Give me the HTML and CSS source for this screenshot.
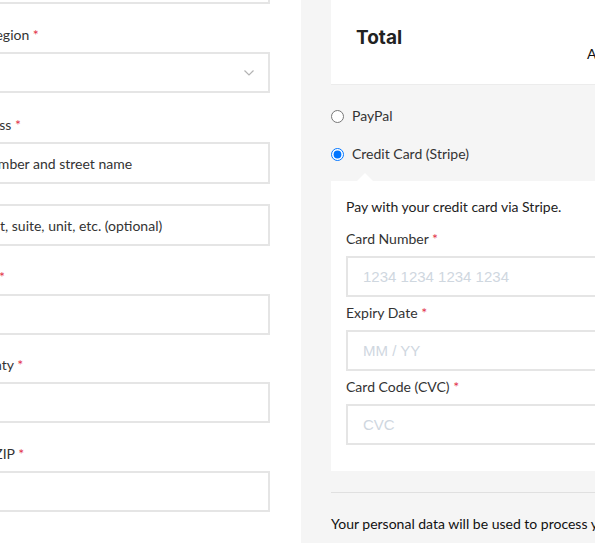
FILE: index.html
```html
<!DOCTYPE html>
<html lang="en">
<head>
<meta charset="utf-8">
<title>Checkout</title>
<link rel="stylesheet" href="styles.css">
</head>
<body>
<div class="page">
  <section class="billing">
    <div class="field field-first">
      <input class="text-input" type="text" placeholder="">
    </div>
    <div class="field field-region">
      <label class="field-label">Country / Region <span class="req">*</span></label>
      <div class="select-box">
        <span class="select-value"></span>
        <svg class="chevron" width="10" height="6" viewBox="0 0 10 6"><polyline points="0.5,0.5 5,5 9.5,0.5" fill="none" stroke="#b3b3b3" stroke-width="1.2"/></svg>
      </div>
    </div>
    <div class="field">
      <label class="field-label">Street address <span class="req">*</span></label>
      <input class="text-input text-input-tall" type="text" placeholder="House number and street name">
      <input class="text-input text-input-tall text-input-second" type="text" placeholder="Apartment, suite, unit, etc. (optional)">
    </div>
    <div class="field field-town">
      <label class="field-label">Town / City <span class="req">*</span></label>
      <input class="text-input" type="text">
    </div>
    <div class="field field-county">
      <label class="field-label">State / County <span class="req">*</span></label>
      <input class="text-input" type="text">
    </div>
    <div class="field">
      <label class="field-label">Postcode / ZIP <span class="req">*</span></label>
      <input class="text-input" type="text">
    </div>
  </section>

  <aside class="order">
    <div class="totals">
      <h3 class="totals-label">Total</h3>
      <div class="totals-amount">Amount due</div>
    </div>

    <ul class="methods">
      <li class="method">
        <label class="method-label"><input class="method-radio" type="radio" name="pm"> PayPal</label>
      </li>
      <li class="method">
        <label class="method-label"><input class="method-radio" type="radio" name="pm" checked> Credit Card (Stripe)</label>
        <div class="payment-box">
          <p class="payment-intro">Pay with your credit card via Stripe.</p>
          <div class="card-field">
            <label class="field-label">Card Number <span class="req">*</span></label>
            <div class="card-input">1234 1234 1234 1234</div>
          </div>
          <div class="card-field">
            <label class="field-label">Expiry Date <span class="req">*</span></label>
            <div class="card-input">MM / YY</div>
          </div>
          <div class="card-field">
            <label class="field-label">Card Code (CVC) <span class="req">*</span></label>
            <div class="card-input">CVC</div>
          </div>
        </div>
      </li>
    </ul>

    <hr class="divider">
    <p class="privacy">Your personal data will be used to process your order, support your experience throughout this website, and for other purposes described in our privacy policy.</p>
  </aside>
</div>
</body>
</html>
```

FILE: styles.css
```css
* { box-sizing: border-box; }
html, body { margin: 0; padding: 0; }
body {
  font-family: Lato, "Noto Sans", sans-serif;
  font-size: 14px;
  color: #333;
  background: #fff;
  overflow: hidden;
  width: 595px;
  height: 543px;
}
.page {
  display: grid;
  grid-template-columns: 301px 540px;
  height: 543px;
}

/* Billing column */
.billing {
  margin-left: -76px;
  padding-right: 31px;
  background: #fff;
}
.field { margin-bottom: 20px; }
.field-region { margin-bottom: 21px; }
.field-town { margin-bottom: 19px; }
.field-first { margin-top: -37px; }
.field-label {
  display: block;
  line-height: 22px;
  margin-bottom: 6px;
  color: #333;
}
.req { color: #e2334a; }
.text-input {
  display: block;
  width: 100%;
  height: 41px;
  border: 2px solid #e5e5e5;
  padding: 0 13px;
  font-family: Lato, "Noto Sans", sans-serif;
  font-size: 14px;
  color: #333;
  background: #fff;
  outline: none;
}
.text-input-tall { height: 42px; }
.text-input::placeholder { color: #333; opacity: 1; }
.text-input-second { margin-top: 20px; }
.select-box {
  height: 41px;
  border: 2px solid #e5e5e5;
  display: flex;
  align-items: center;
  justify-content: space-between;
  padding: 0 14px 0 13px;
  background: #fff;
}

/* Order column */
.order {
  background: #f5f5f5;
  padding: 0 30px;
}
.totals {
  background: #fff;
  height: 84px;
  display: grid;
  grid-template-columns: 231px 1fr;
  padding-left: 25px;
  box-shadow: 0 1px 0 #ececec;
}
.totals-label {
  margin: 0;
  padding-top: 26px;
  font-family: Inter, "Open Sans", sans-serif;
  font-weight: 700;
  font-size: 19px;
  line-height: 24px;
  color: #222;
}
.totals-amount {
  padding-top: 43px;
  line-height: 22px;
  color: #111;
}
.methods {
  list-style: none;
  margin: 21px 0 0;
  padding: 0;
}
.method { margin-bottom: 16px; }
.method-label {
  display: flex;
  align-items: center;
  gap: 8px;
  line-height: 22px;
  color: #333;
}
.method-radio {
  margin: 0;
  width: 13px;
  height: 13px;
}
.payment-box {
  position: relative;
  background: #fff;
  margin-top: 16px;
  padding: 15px 15px 26px;
}
.payment-box::before {
  content: "";
  position: absolute;
  top: -8px;
  left: 26px;
  border-left: 8px solid transparent;
  border-right: 8px solid transparent;
  border-bottom: 8px solid #fff;
}
.payment-intro {
  margin: 0 0 10px;
  line-height: 22px;
  color: #222;
}
.card-field { margin-top: 5px; }
.card-field:first-of-type { margin-top: 0; }
.card-input {
  height: 41px;
  border: 2px solid #e5e5e5;
  padding: 0 15px;
  display: flex;
  align-items: center;
  font-family: "Liberation Sans", Arial, sans-serif;
  font-size: 15px;
  color: #cfd7df;
  background: #fff;
}
.divider {
  border: 0;
  border-top: 1px solid #e0e0e0;
  margin: 21px 0 0;
}
.privacy {
  margin: 19px 0 0;
  line-height: 24px;
  color: #111;
}
```
